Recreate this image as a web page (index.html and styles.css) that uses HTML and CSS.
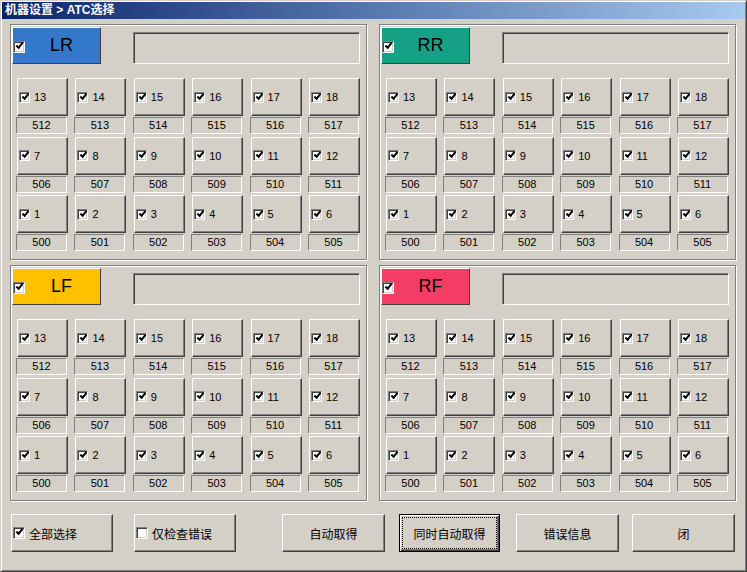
FILE: index.html
```html
<!DOCTYPE html>
<html lang="zh">
<head>
<meta charset="utf-8">
<title>机器设置 &gt; ATC选择</title>
<link rel="stylesheet" href="styles.css">
</head>
<body>
<div class="window">
  <div class="titlebar">机器设置 &gt; ATC选择</div>
  <div class="groups">
    <div class="group">
      <div class="head">
        <div class="tag tag-lr"><span class="cb on"></span><span class="name">LR</span></div>
        <div class="field"></div>
      </div>
      <div class="grid">
        <div class="cell"><div class="btn"><span class="cb on"></span><span class="num">13</span></div><div class="code">512</div></div>
        <div class="cell"><div class="btn"><span class="cb on"></span><span class="num">14</span></div><div class="code">513</div></div>
        <div class="cell"><div class="btn"><span class="cb on"></span><span class="num">15</span></div><div class="code">514</div></div>
        <div class="cell"><div class="btn"><span class="cb on"></span><span class="num">16</span></div><div class="code">515</div></div>
        <div class="cell"><div class="btn"><span class="cb on"></span><span class="num">17</span></div><div class="code">516</div></div>
        <div class="cell"><div class="btn"><span class="cb on"></span><span class="num">18</span></div><div class="code">517</div></div>
        <div class="cell"><div class="btn"><span class="cb on"></span><span class="num">7</span></div><div class="code">506</div></div>
        <div class="cell"><div class="btn"><span class="cb on"></span><span class="num">8</span></div><div class="code">507</div></div>
        <div class="cell"><div class="btn"><span class="cb on"></span><span class="num">9</span></div><div class="code">508</div></div>
        <div class="cell"><div class="btn"><span class="cb on"></span><span class="num">10</span></div><div class="code">509</div></div>
        <div class="cell"><div class="btn"><span class="cb on"></span><span class="num">11</span></div><div class="code">510</div></div>
        <div class="cell"><div class="btn"><span class="cb on"></span><span class="num">12</span></div><div class="code">511</div></div>
        <div class="cell"><div class="btn"><span class="cb on"></span><span class="num">1</span></div><div class="code">500</div></div>
        <div class="cell"><div class="btn"><span class="cb on"></span><span class="num">2</span></div><div class="code">501</div></div>
        <div class="cell"><div class="btn"><span class="cb on"></span><span class="num">3</span></div><div class="code">502</div></div>
        <div class="cell"><div class="btn"><span class="cb on"></span><span class="num">4</span></div><div class="code">503</div></div>
        <div class="cell"><div class="btn"><span class="cb on"></span><span class="num">5</span></div><div class="code">504</div></div>
        <div class="cell"><div class="btn"><span class="cb on"></span><span class="num">6</span></div><div class="code">505</div></div>
      </div>
    </div>
    <div class="group">
      <div class="head">
        <div class="tag tag-rr"><span class="cb on"></span><span class="name">RR</span></div>
        <div class="field"></div>
      </div>
      <div class="grid">
        <div class="cell"><div class="btn"><span class="cb on"></span><span class="num">13</span></div><div class="code">512</div></div>
        <div class="cell"><div class="btn"><span class="cb on"></span><span class="num">14</span></div><div class="code">513</div></div>
        <div class="cell"><div class="btn"><span class="cb on"></span><span class="num">15</span></div><div class="code">514</div></div>
        <div class="cell"><div class="btn"><span class="cb on"></span><span class="num">16</span></div><div class="code">515</div></div>
        <div class="cell"><div class="btn"><span class="cb on"></span><span class="num">17</span></div><div class="code">516</div></div>
        <div class="cell"><div class="btn"><span class="cb on"></span><span class="num">18</span></div><div class="code">517</div></div>
        <div class="cell"><div class="btn"><span class="cb on"></span><span class="num">7</span></div><div class="code">506</div></div>
        <div class="cell"><div class="btn"><span class="cb on"></span><span class="num">8</span></div><div class="code">507</div></div>
        <div class="cell"><div class="btn"><span class="cb on"></span><span class="num">9</span></div><div class="code">508</div></div>
        <div class="cell"><div class="btn"><span class="cb on"></span><span class="num">10</span></div><div class="code">509</div></div>
        <div class="cell"><div class="btn"><span class="cb on"></span><span class="num">11</span></div><div class="code">510</div></div>
        <div class="cell"><div class="btn"><span class="cb on"></span><span class="num">12</span></div><div class="code">511</div></div>
        <div class="cell"><div class="btn"><span class="cb on"></span><span class="num">1</span></div><div class="code">500</div></div>
        <div class="cell"><div class="btn"><span class="cb on"></span><span class="num">2</span></div><div class="code">501</div></div>
        <div class="cell"><div class="btn"><span class="cb on"></span><span class="num">3</span></div><div class="code">502</div></div>
        <div class="cell"><div class="btn"><span class="cb on"></span><span class="num">4</span></div><div class="code">503</div></div>
        <div class="cell"><div class="btn"><span class="cb on"></span><span class="num">5</span></div><div class="code">504</div></div>
        <div class="cell"><div class="btn"><span class="cb on"></span><span class="num">6</span></div><div class="code">505</div></div>
      </div>
    </div>
    <div class="group">
      <div class="head">
        <div class="tag tag-lf"><span class="cb on"></span><span class="name">LF</span></div>
        <div class="field"></div>
      </div>
      <div class="grid">
        <div class="cell"><div class="btn"><span class="cb on"></span><span class="num">13</span></div><div class="code">512</div></div>
        <div class="cell"><div class="btn"><span class="cb on"></span><span class="num">14</span></div><div class="code">513</div></div>
        <div class="cell"><div class="btn"><span class="cb on"></span><span class="num">15</span></div><div class="code">514</div></div>
        <div class="cell"><div class="btn"><span class="cb on"></span><span class="num">16</span></div><div class="code">515</div></div>
        <div class="cell"><div class="btn"><span class="cb on"></span><span class="num">17</span></div><div class="code">516</div></div>
        <div class="cell"><div class="btn"><span class="cb on"></span><span class="num">18</span></div><div class="code">517</div></div>
        <div class="cell"><div class="btn"><span class="cb on"></span><span class="num">7</span></div><div class="code">506</div></div>
        <div class="cell"><div class="btn"><span class="cb on"></span><span class="num">8</span></div><div class="code">507</div></div>
        <div class="cell"><div class="btn"><span class="cb on"></span><span class="num">9</span></div><div class="code">508</div></div>
        <div class="cell"><div class="btn"><span class="cb on"></span><span class="num">10</span></div><div class="code">509</div></div>
        <div class="cell"><div class="btn"><span class="cb on"></span><span class="num">11</span></div><div class="code">510</div></div>
        <div class="cell"><div class="btn"><span class="cb on"></span><span class="num">12</span></div><div class="code">511</div></div>
        <div class="cell"><div class="btn"><span class="cb on"></span><span class="num">1</span></div><div class="code">500</div></div>
        <div class="cell"><div class="btn"><span class="cb on"></span><span class="num">2</span></div><div class="code">501</div></div>
        <div class="cell"><div class="btn"><span class="cb on"></span><span class="num">3</span></div><div class="code">502</div></div>
        <div class="cell"><div class="btn"><span class="cb on"></span><span class="num">4</span></div><div class="code">503</div></div>
        <div class="cell"><div class="btn"><span class="cb on"></span><span class="num">5</span></div><div class="code">504</div></div>
        <div class="cell"><div class="btn"><span class="cb on"></span><span class="num">6</span></div><div class="code">505</div></div>
      </div>
    </div>
    <div class="group">
      <div class="head">
        <div class="tag tag-rf"><span class="cb on"></span><span class="name">RF</span></div>
        <div class="field"></div>
      </div>
      <div class="grid">
        <div class="cell"><div class="btn"><span class="cb on"></span><span class="num">13</span></div><div class="code">512</div></div>
        <div class="cell"><div class="btn"><span class="cb on"></span><span class="num">14</span></div><div class="code">513</div></div>
        <div class="cell"><div class="btn"><span class="cb on"></span><span class="num">15</span></div><div class="code">514</div></div>
        <div class="cell"><div class="btn"><span class="cb on"></span><span class="num">16</span></div><div class="code">515</div></div>
        <div class="cell"><div class="btn"><span class="cb on"></span><span class="num">17</span></div><div class="code">516</div></div>
        <div class="cell"><div class="btn"><span class="cb on"></span><span class="num">18</span></div><div class="code">517</div></div>
        <div class="cell"><div class="btn"><span class="cb on"></span><span class="num">7</span></div><div class="code">506</div></div>
        <div class="cell"><div class="btn"><span class="cb on"></span><span class="num">8</span></div><div class="code">507</div></div>
        <div class="cell"><div class="btn"><span class="cb on"></span><span class="num">9</span></div><div class="code">508</div></div>
        <div class="cell"><div class="btn"><span class="cb on"></span><span class="num">10</span></div><div class="code">509</div></div>
        <div class="cell"><div class="btn"><span class="cb on"></span><span class="num">11</span></div><div class="code">510</div></div>
        <div class="cell"><div class="btn"><span class="cb on"></span><span class="num">12</span></div><div class="code">511</div></div>
        <div class="cell"><div class="btn"><span class="cb on"></span><span class="num">1</span></div><div class="code">500</div></div>
        <div class="cell"><div class="btn"><span class="cb on"></span><span class="num">2</span></div><div class="code">501</div></div>
        <div class="cell"><div class="btn"><span class="cb on"></span><span class="num">3</span></div><div class="code">502</div></div>
        <div class="cell"><div class="btn"><span class="cb on"></span><span class="num">4</span></div><div class="code">503</div></div>
        <div class="cell"><div class="btn"><span class="cb on"></span><span class="num">5</span></div><div class="code">504</div></div>
        <div class="cell"><div class="btn"><span class="cb on"></span><span class="num">6</span></div><div class="code">505</div></div>
      </div>
    </div>
  </div>
  <div class="bar">
    <div class="pbtn check b-all"><span class="cb on"></span><span class="label">全部选择</span></div>
    <div class="pbtn check b-errors"><span class="cb"></span><span class="label">仅检查错误</span></div>
    <div class="pbtn b-auto">自动取得</div>
    <div class="pbtn focus b-sync">同时自动取得</div>
    <div class="pbtn b-info">错误信息</div>
    <div class="pbtn b-close">闭</div>
  </div>
</div>
</body>
</html>
```
FILE: styles.css
```css
html, body {
  margin: 0;
  padding: 0;
  background: #d4d0c8;
}

.window {
  position: relative;
  width: 747px;
  height: 572px;
  box-sizing: border-box;
  background: #d4d0c8;
  border: 1px solid;
  border-color: #d4d0c8 #404040 #404040 #d4d0c8;
  box-shadow: inset 1px 1px #ffffff, inset -1px -1px #808080;
  font-family: "Liberation Sans", "Noto Sans CJK SC", sans-serif;
  font-size: 11px;
  color: #000;
  overflow: hidden;
}

.titlebar {
  margin: 1px 1px 0;
  height: 17px;
  padding-left: 3px;
  background: linear-gradient(to right, #0a246a, #a6caf0);
  color: #fff;
  font-family: "Liberation Sans", "Noto Sans CJK SC", sans-serif;
  font-weight: bold;
  font-size: 12px;
  line-height: 17px;
  white-space: nowrap;
}

.groups {
  display: grid;
  grid-template-columns: 357px 357px;
  grid-template-rows: 236px 236px;
  column-gap: 12px;
  row-gap: 5px;
  margin: 5px 0 0 9px;
}

.group {
  box-sizing: border-box;
  border: 1px solid #808080;
  box-shadow: inset 1px 1px #ffffff, 1px 1px #ffffff;
  padding: 2px 0 0 1px;
}

.head {
  display: flex;
  align-items: flex-end;
}

.tag {
  width: 89px;
  height: 37px;
  box-sizing: border-box;
  border: 1px solid;
  border-color: #ffffff #404040 #404040 #ffffff;
  display: flex;
  align-items: center;
  font-size: 18px;
}

.tag .cb {
  width: 12px;
  height: 12px;
  margin-top: 2px;
}

.tag .name {
  flex: 1;
  text-align: center;
  padding-right: 2px;
}

.tag-lr { background: #3478c9; }
.tag-rr { background: #16a085; }
.tag-lf { background: #ffc000; }
.tag-rf { background: #f33d64; }

.field {
  width: 227px;
  height: 32px;
  margin-left: 32px;
  box-sizing: border-box;
  border: 1px solid;
  border-color: #808080 #ffffff #ffffff #808080;
  box-shadow: inset 1px 1px #404040, inset -1px -1px #d4d0c8;
}

.grid {
  display: grid;
  grid-template-columns: repeat(6, 51px);
  column-gap: 7.4px;
  row-gap: 2.5px;
  margin: 14px 0 0 5px;
}

.cell {
  display: flex;
  flex-direction: column;
}

.btn {
  height: 38px;
  box-sizing: border-box;
  border: 1px solid;
  border-color: #ffffff #404040 #404040 #ffffff;
  box-shadow: inset -1px -1px #808080;
  display: flex;
  align-items: center;
  padding-left: 1px;
}

.num {
  margin-left: 4px;
  line-height: 12px;
}

.code {
  height: 17px;
  margin: 1px 1px 0 -1px;
  box-sizing: border-box;
  border: 1px solid;
  border-color: #808080 #ffffff #ffffff #808080;
  text-align: center;
  line-height: 15px;
}

.cb {
  position: relative;
  flex: none;
  width: 11px;
  height: 11px;
  box-sizing: border-box;
  background: #ffffff;
  border: 1px solid;
  border-color: #808080 #ffffff #ffffff #808080;
  box-shadow: inset 1px 1px #404040, inset -1px -1px #d4d0c8;
}

.cb.on::after {
  content: "";
  position: absolute;
  left: 2px;
  top: 1px;
  width: 5px;
  height: 2px;
  border-left: 2px solid #000;
  border-bottom: 2px solid #000;
  transform: rotate(-50deg);
}

.bar {
  display: flex;
  margin: 13px 0 0 10px;
}

.pbtn {
  width: 103px;
  height: 38px;
  box-sizing: border-box;
  border: 1px solid;
  border-color: #ffffff #404040 #404040 #ffffff;
  box-shadow: inset -1px -1px #808080;
  display: flex;
  align-items: center;
  justify-content: center;
  font-family: "Noto Sans CJK SC", "Liberation Sans", sans-serif;
  font-size: 12px;
}

.pbtn.check {
  justify-content: flex-start;
  padding-left: 1px;
}

.pbtn.check .cb {
  width: 12px;
  height: 12px;
}

.pbtn.check .label {
  margin-left: 4px;
}

.pbtn.focus {
  border-color: #000000;
  box-shadow: inset 1px 1px #ffffff, inset -1px -1px #404040, inset -2px -2px #808080;
  outline: 1px dotted #000;
  outline-offset: -4px;
}

.b-all { width: 102px; }
.b-errors { width: 102px; margin-left: 21px; }
.b-auto { margin-left: 46px; }
.b-sync { width: 101px; margin-left: 14px; }
.b-info { margin-left: 16px; }
.b-close { margin-left: 13px; }
```
